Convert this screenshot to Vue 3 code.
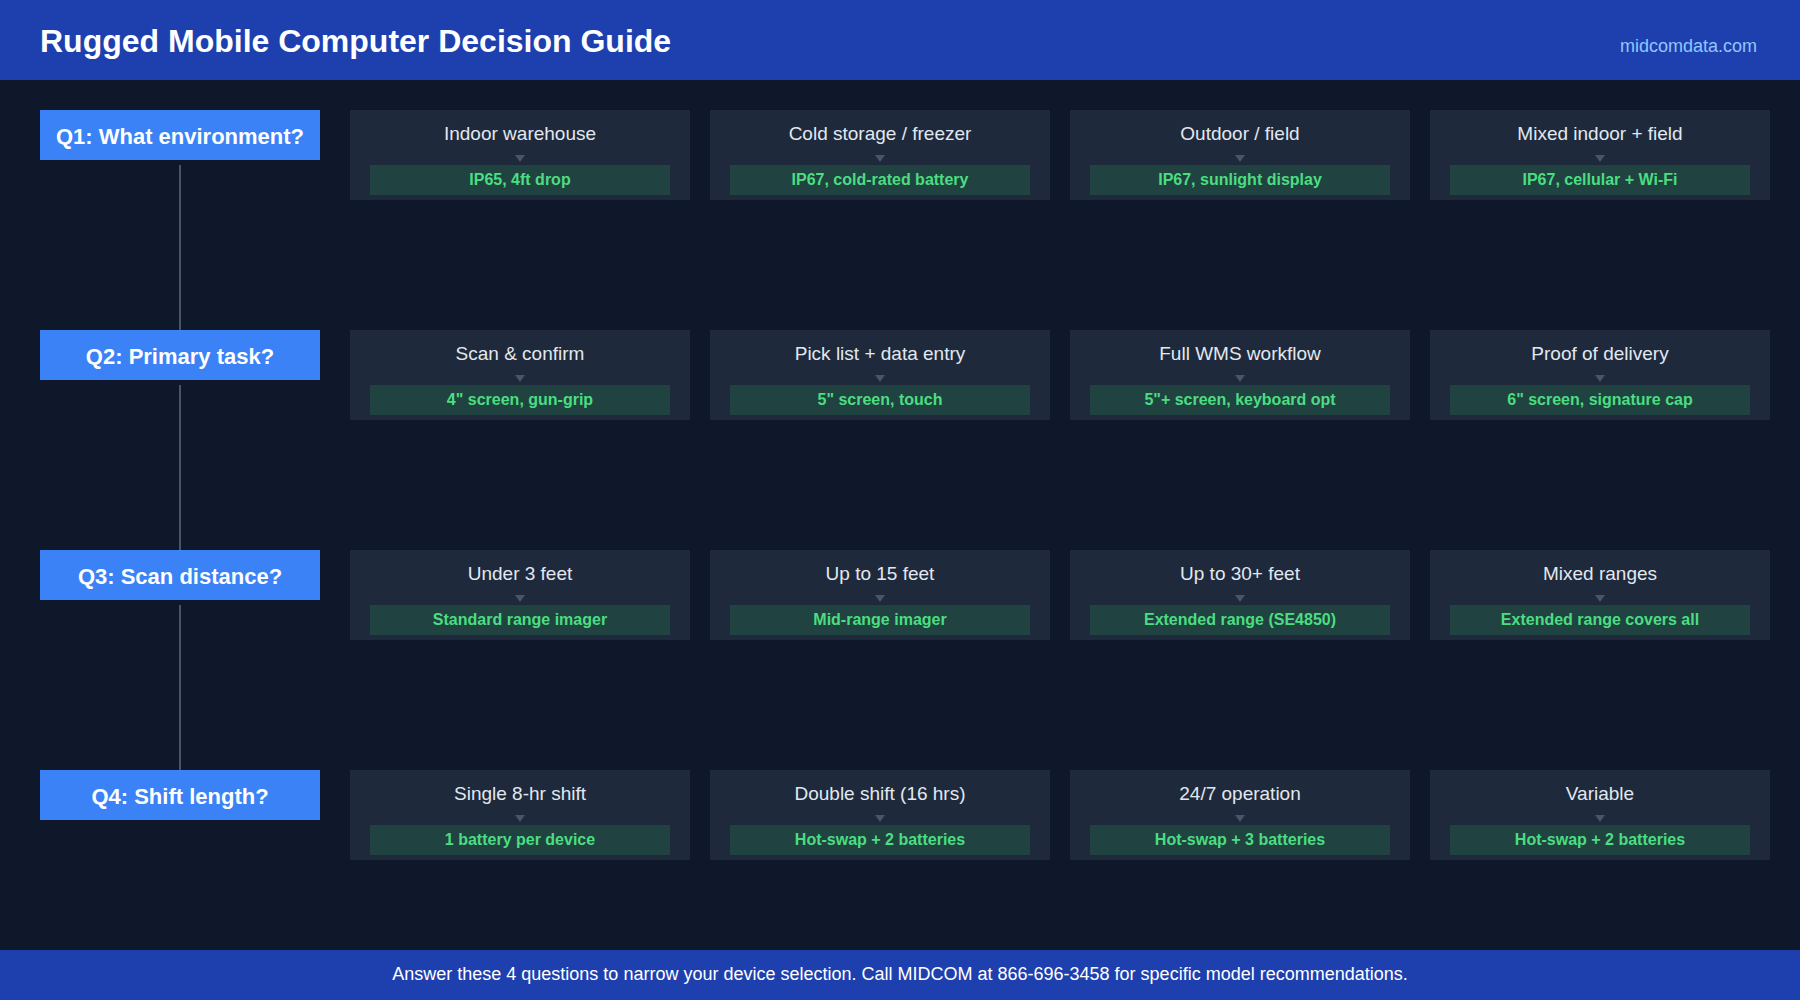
<script setup>
const rows = [
  { q: 'Q1: What environment?', opts: [
    ['Indoor warehouse', 'IP65, 4ft drop'],
    ['Cold storage / freezer', 'IP67, cold-rated battery'],
    ['Outdoor / field', 'IP67, sunlight display'],
    ['Mixed indoor + field', 'IP67, cellular + Wi-Fi'],
  ] },
  { q: 'Q2: Primary task?', opts: [
    ['Scan & confirm', '4" screen, gun-grip'],
    ['Pick list + data entry', '5" screen, touch'],
    ['Full WMS workflow', '5"+ screen, keyboard opt'],
    ['Proof of delivery', '6" screen, signature cap'],
  ] },
  { q: 'Q3: Scan distance?', opts: [
    ['Under 3 feet', 'Standard range imager'],
    ['Up to 15 feet', 'Mid-range imager'],
    ['Up to 30+ feet', 'Extended range (SE4850)'],
    ['Mixed ranges', 'Extended range covers all'],
  ] },
  { q: 'Q4: Shift length?', opts: [
    ['Single 8-hr shift', '1 battery per device'],
    ['Double shift (16 hrs)', 'Hot-swap + 2 batteries'],
    ['24/7 operation', 'Hot-swap + 3 batteries'],
    ['Variable', 'Hot-swap + 2 batteries'],
  ] },
]
</script>

<template>
  <div class="page">
    <header class="top">
      <h1 class="title">Rugged Mobile Computer Decision Guide</h1>
      <span class="site">midcomdata.com</span>
    </header>
    <main class="flow">
      <section v-for="(row, i) in rows" :key="row.q" class="row">
        <div class="qcol">
          <div class="question">{{ row.q }}</div>
          <div v-if="i < rows.length - 1" class="connector"></div>
        </div>
        <div class="cards">
          <div v-for="opt in row.opts" :key="opt[0]" class="card">
            <div class="label">{{ opt[0] }}</div>
            <div class="arrow"></div>
            <div class="result">{{ opt[1] }}</div>
          </div>
        </div>
      </section>
    </main>
    <footer class="foot">Answer these 4 questions to narrow your device selection. Call MIDCOM at 866-696-3458 for specific model recommendations.</footer>
  </div>
</template>

<style scoped>
.page {
  width: 1800px;
  height: 1000px;
  display: flex;
  flex-direction: column;
  background: #0f172a;
  font-family: "Liberation Sans", Arial, sans-serif;
  overflow: hidden;
}
.top {
  height: 80px;
  flex: none;
  display: flex;
  justify-content: space-between;
  align-items: center;
  padding: 0 43px 0 40px;
  background: #1e40af;
}
.title {
  margin: 0;
  padding-top: 2px;
  font-size: 32px;
  line-height: 78px;
  font-weight: 700;
  color: #fff;
}
.site {
  font-size: 18px;
  color: #93c5fd;
  padding-top: 12px;
}
.flow {
  flex: 1;
  padding-top: 30px;
  display: grid;
  grid-template-rows: 220px 220px 220px 1fr;
}
.row {
  display: grid;
  grid-template-columns: 280px 1420px;
  column-gap: 30px;
  padding-left: 40px;
}
.qcol {
  display: flex;
  flex-direction: column;
  align-items: center;
}
.question {
  width: 100%;
  height: 50px;
  flex: none;
  display: flex;
  align-items: center;
  justify-content: center;
  background: #3b82f6;
  color: #fff;
  font-size: 22px;
  font-weight: 700;
  padding-top: 4px;
  box-sizing: border-box;
}
.connector {
  width: 2px;
  flex: 1;
  margin-top: 5px;
  background: #475569;
}
.cards {
  display: grid;
  grid-template-columns: repeat(4, 340px);
  column-gap: 20px;
  align-items: start;
}
.card {
  height: 90px;
  box-sizing: border-box;
  padding: 13px 20px 5px;
  background: #1e293b;
  display: flex;
  flex-direction: column;
  align-items: center;
}
.label {
  height: 22px;
  line-height: 22px;
  font-size: 19px;
  color: #e2e8f0;
}
.arrow {
  width: 0;
  height: 0;
  margin-top: 10px;
  margin-bottom: 3px;
  border-left: 5px solid transparent;
  border-right: 5px solid transparent;
  border-top: 7px solid #475569;
}
.result {
  align-self: stretch;
  height: 30px;
  line-height: 30px;
  text-align: center;
  font-size: 16px;
  font-weight: 700;
  color: #4ade80;
  background: #204241;
}
.foot {
  height: 50px;
  flex: none;
  box-sizing: border-box;
  padding-bottom: 2px;
  display: flex;
  align-items: center;
  justify-content: center;
  background: #1e40af;
  color: #fff;
  font-size: 18px;
}
</style>
